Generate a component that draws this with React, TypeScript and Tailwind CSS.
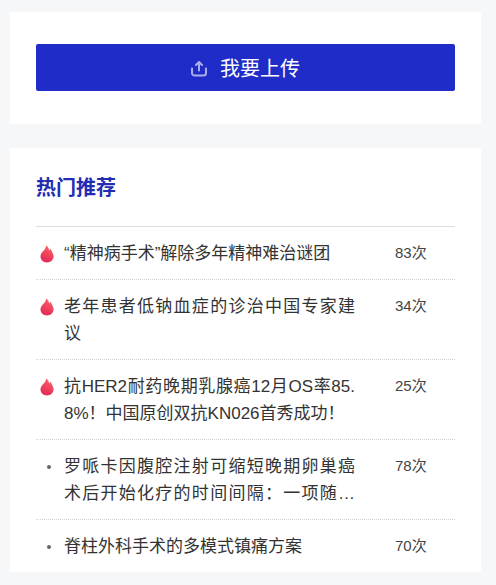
type Article = {
  lines: string[];
  views: number;
  hot: boolean;
  clamped?: boolean;
};

const articles: Article[] = [
  { lines: ["“精神病手术”解除多年精神难治谜团"], views: 83, hot: true },
  { lines: ["老年患者低钠血症的诊治中国专家建", "议"], views: 34, hot: true },
  {
    lines: ["抗HER2耐药晚期乳腺癌12月OS率85.", "8%！中国原创双抗KN026首秀成功！"],
    views: 25,
    hot: true,
  },
  {
    lines: ["罗哌卡因腹腔注射可缩短晚期卵巢癌", "术后开始化疗的时间间隔：一项随…"],
    views: 78,
    hot: false,
    clamped: true,
  },
  { lines: ["脊柱外科手术的多模式镇痛方案"], views: 70, hot: false },
];

function UploadIcon() {
  return (
    <svg
      className="h-4 w-4"
      viewBox="0 0 16 16"
      fill="none"
      stroke="#a9aeee"
      strokeWidth="2"
      strokeLinecap="round"
      strokeLinejoin="round"
      aria-hidden="true"
    >
      <path d="M8 9.500V1.300M5 4 8 1l3 3" />
      <path d="M1 7.500v4.500a2.500 2.500 0 0 0 2.500 2.500h9a2.500 2.500 0 0 0 2.500-2.500V7.500" />
    </svg>
  );
}

function FlameIcon() {
  return (
    <svg className="h-[18px] w-[14px]" viewBox="0 0 14 18" aria-hidden="true">
      <defs>
        <linearGradient id="flame" x1="0.7" y1="0" x2="0.3" y2="1">
          <stop offset="0" stopColor="#fa6467" />
          <stop offset="1" stopColor="#e42655" />
        </linearGradient>
      </defs>
      <path
        fill="url(#flame)"
        d="M6.100 .5C7.900 1.600 8.900 3.100 9.100 5.500 9.900 5.200 10.400 4.600 10.600 3.600 11.300 4.700 11.500 6 12.200 7.300 13 8.700 13.600 9.900 13.600 11.300 13.600 14.900 10.700 17.500 7 17.500S.5 14.900.5 11.600C.5 9.500 1.500 8 3 6.300 4.600 4.500 6 3 6.100 .5Z"
      />
    </svg>
  );
}

function ArticleRow({ article }: { article: Article }) {
  const lastIndex = article.lines.length - 1;
  return (
    <li className="flex border-b border-dotted border-[#d3d3d3] pt-[13px] pb-3 last:border-b-0">
      <span className="flex h-[27px] w-7 shrink-0 items-center pl-1">
        {article.hot ? (
          <FlameIcon />
        ) : (
          <span className="ml-[7px] h-1 w-1 rounded-full bg-[#666666]" />
        )}
      </span>
      <a href="#" className="min-w-0 flex-1 text-[17px] leading-[27px] text-[#333333]">
        {article.lines.map((line, i) => (
          <span
            key={line}
            className={
              i < lastIndex || article.clamped
                ? "block text-justify [text-align-last:justify]"
                : "block"
            }
          >
            {line}
          </span>
        ))}
      </a>
      <span className="ml-10 w-[60px] shrink-0 text-[15px] leading-[25px] text-[#444444]">
        {article.views}次
      </span>
    </li>
  );
}

export default function App() {
  return (
    <div
      lang="zh-CN"
      className="flex min-h-screen flex-col gap-6 bg-[#f5f7f9] pt-3 pr-[15px] pb-[13px] pl-[10px] font-['Liberation_Sans','Noto_Sans_CJK_SC',sans-serif]"
    >
      <section className="bg-white px-[26px] pt-8 pb-[33px]">
        <button
          type="button"
          className="flex h-[47px] w-full items-center justify-center gap-[13px] rounded-[2px] bg-[#1f2cc7] pt-0.5 text-xl text-white"
        >
          <UploadIcon />
          我要上传
        </button>
      </section>

      <section className="bg-white px-[26px] pt-6">
        <h2 className="text-xl leading-8 font-bold text-[#232db4]">热门推荐</h2>
        <ul className="mt-[22px] border-t border-[#dddddd]">
          {articles.map((article) => (
            <ArticleRow key={article.lines[0]} article={article} />
          ))}
        </ul>
      </section>
    </div>
  );
}
